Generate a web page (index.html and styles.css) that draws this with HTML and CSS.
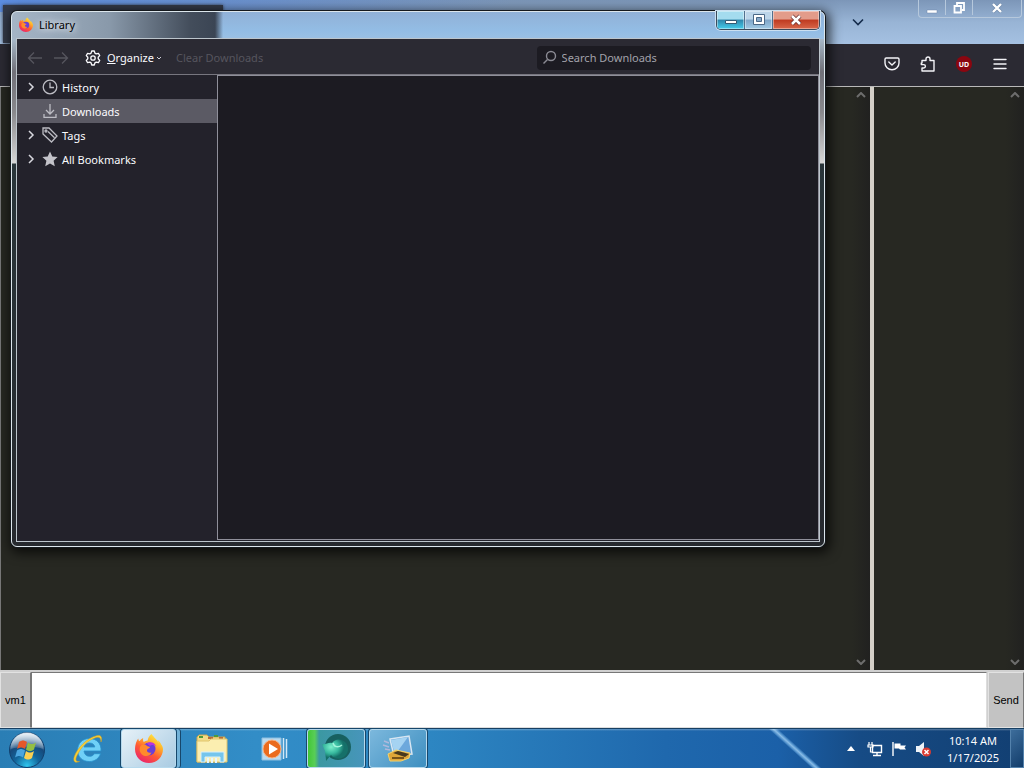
FILE: index.html
```html
<!DOCTYPE html>
<html lang="en">
<head>
    <meta charset="UTF-8">
    <meta name="viewport" content="width=device-width, initial-scale=1.0">
    <title>Library</title>
    <link rel="stylesheet" href="styles.css">
</head>
<body>
    <div class="desktop">
        <!-- Browser behind the library window -->
        <header class="browser-title">
            <div class="browser-tab"></div>
            <button class="tab-list" aria-label="List all tabs">
                <svg width="14" height="8" viewBox="0 0 14 8"><path d="M2 1.5l5 5 5-5" fill="none" stroke="#152c4c" stroke-width="1.6"/></svg>
            </button>
            <div class="browser-controls">
                <button aria-label="Minimize"><svg width="12" height="12" viewBox="0 0 12 12"><path d="M1 8h10v3H1z" fill="#fff" stroke="#6c87a8" stroke-width=".5"/></svg></button>
                <button aria-label="Restore"><svg width="12" height="12" viewBox="0 0 12 12"><path d="M4 3V1h7v7H9M1.500 4h6.500v6.500H1.500z" fill="none" stroke="#fff" stroke-width="1.8"/></svg></button>
                <button class="wide" aria-label="Close"><svg width="12" height="12" viewBox="0 0 12 12"><path d="M2 2l8 8M10 2l-8 8" stroke="#6c87a8" stroke-width="3.500"/><path d="M2 2l8 8M10 2l-8 8" stroke="#fff" stroke-width="2.400"/></svg></button>
            </div>
        </header>
        <div class="browser-toolbar">
            <button aria-label="Save to Pocket">
                <svg width="16" height="16" viewBox="0 0 16 16" fill="none" stroke="#f4f4f8" stroke-width="1.4" stroke-linecap="round" stroke-linejoin="round"><path d="M2.200 2h11.600c.7 0 1.200.5 1.200 1.200V7a7 6.800 0 0 1-14 0V3.200C1 2.500 1.500 2 2.200 2z"/><path d="M4.800 6L8 9l3.200-3"/></svg>
            </button>
            <button aria-label="Extensions">
                <svg width="16" height="16" viewBox="0 0 16 16" fill="none" stroke="#f4f4f8" stroke-width="1.4" stroke-linejoin="round"><path d="M2 7V4.500h4V3a2 2 0 0 1 4 0v1.500h4V15H2v-3h1.700a1.700 1.700 0 0 0 0-3.400H1.300V7z"/></svg>
            </button>
            <button class="ublock" aria-label="uBlock Origin">UD</button>
            <button aria-label="Menu">
                <svg width="16" height="16" viewBox="0 0 16 16"><path d="M2 3.500h12M2 8h12M2 12.500h12" stroke="#f4f4f8" stroke-width="1.4" stroke-linecap="round"/></svg>
            </button>
        </div>
        <main class="panes">
            <section class="pane pane-log">
                <div class="scrollbar">
                    <svg width="10" height="6" viewBox="0 0 10 6"><path d="M1 5l4-4 4 4" fill="none" stroke="#6d6d6d" stroke-width="2"/></svg>
                    <svg width="10" height="6" viewBox="0 0 10 6"><path d="M1 1l4 4 4-4" fill="none" stroke="#6d6d6d" stroke-width="2"/></svg>
                </div>
            </section>
            <section class="pane pane-users">
                <div class="scrollbar">
                    <svg width="10" height="6" viewBox="0 0 10 6"><path d="M1 5l4-4 4 4" fill="none" stroke="#6d6d6d" stroke-width="2"/></svg>
                    <svg width="10" height="6" viewBox="0 0 10 6"><path d="M1 1l4 4 4-4" fill="none" stroke="#6d6d6d" stroke-width="2"/></svg>
                </div>
            </section>
        </main>
        <form class="chat-form">
            <button type="button" class="chat-vm">vm1</button>
            <textarea class="chat-input" aria-label="Message"></textarea>
            <button type="button" class="chat-send">Send</button>
        </form>

        <footer class="taskbar">
            <button class="start" aria-label="Start">
                <svg width="40" height="38" viewBox="0 0 40 38">
                    <defs>
                        <radialGradient id="orb" cx=".5" cy=".95" r=".9"><stop offset="0" stop-color="#2fc6ee"/><stop offset=".4" stop-color="#12659b"/><stop offset=".7" stop-color="#164a7c"/><stop offset="1" stop-color="#a9c4da"/></radialGradient>
                        <linearGradient id="shine" x2="0" y2="1"><stop offset="0" stop-color="#fff" stop-opacity=".75"/><stop offset="1" stop-color="#fff" stop-opacity=".15"/></linearGradient>
                    </defs>
                    <circle cx="20" cy="20" r="17.500" fill="url(#orb)" stroke="#11406e"/>
                    <path d="M3.500 19a16.500 16.500 0 0 1 33 0c-9-3-22-3-33 0z" fill="url(#shine)"/>
                    <path d="M12 12c3-2 5-2 8 0l-2 7c-3-2-5-2-8 0z" fill="#e5582a"/>
                    <path d="M21 12.500c3 2 5 2 8 0l-2 7c-3 2-5 2-8 0z" fill="#93bf43"/>
                    <path d="M10 20.500c3-2 5-2 8 0l-2 7c-3-2-5-2-8 0z" fill="#4aa5df"/>
                    <path d="M19 21c3 2 5 2 8 0l-2 7c-3 2-5 2-8 0z" fill="#fbd052"/>
                </svg>
            </button>
            <button class="task" aria-label="Internet Explorer">
                <svg width="34" height="34" viewBox="0 0 34 34">
                    <path d="M30 19H13c.3 3.500 2.600 5.300 5.500 5.300 2.200 0 4-.9 4.800-2.600h6.200c-1.600 4.800-5.700 7.800-11.200 7.800-7 0-11.700-4.600-11.700-11.300S11.400 6.500 18.300 6.500C25.600 6.500 30.600 11.500 30 19zm-17-4h10.800c-.4-2.500-2.500-4-5.400-4-2.800 0-4.800 1.500-5.400 4z" fill="#6fd0f7" stroke="#278fca" stroke-width=".8"/>
                    <path d="M30 10c1.500-5 0-7.500-4.500-6.300C16 6 6.500 16 3.500 24c-1.800 4.800 0 7.800 5 5.500-4 .5-4.500-2-2.500-6C10 15 17 8 25 5.500c3.500-1 5 .5 5 4.500z" fill="#f8cf35" stroke="#d9a21c" stroke-width=".5"/>
                </svg>
            </button>
            <button class="task task-active" aria-label="Firefox">
                <svg width="32" height="32" viewBox="0 0 32 32">
                    <defs>
                        <linearGradient id="fox" x1=".8" y1="0" x2=".2" y2="1"><stop offset="0" stop-color="#fff04c"/><stop offset=".3" stop-color="#ffb52a"/><stop offset=".6" stop-color="#ff5a34"/><stop offset="1" stop-color="#e81e72"/></linearGradient>
                    </defs>
                    <path id="flame" d="M28.500 12c-.8-2-2.500-4-3.800-4.700.5 1 .8 2 1 3C24 6 20.800 4.600 18.500 1c-2.500 1.700-3.700 4.500-3.800 6.500-1.500.1-2.900.6-4 1.400-.9-1.700-.7-3.300-.5-4-1.800.8-3 2.200-3.800 3.200-.6.200-1-2-1.200-2.700C3.500 8 2 11.500 2 16c0 8 6 14 14 14s14-6 14-14c0-1.500-.8-3-1.500-4z" fill="url(#fox)"/>
                    <circle cx="16" cy="16" r="6.500" fill="#6a3fd8"/>
                    <path d="M7 14c2-3 5-3 7-1l3 1c-.3 1.500-2.500 1.500-3 3-.5 2 2 3.500 4.500 2.500-1.500 4-6.500 4.500-9.500 2-2-1.700-3-4.500-2-7.500z" fill="#ff8a2b"/>
                    <path d="M14 10.500c3-2.500 8-1 9 3-2-1.500-5-2-6-.5z" fill="#b833e1"/>
                </svg>
            </button>
            <button class="task" aria-label="Windows Explorer">
                <svg width="36" height="32" viewBox="0 0 36 32">
                    <path d="M3 4l2-2h8l2 2h16v25H3z" fill="#f3dc88" stroke="#c9a64c"/>
                    <path d="M5 4h4M20 3h4" stroke="#4d9b3c" stroke-width="2"/><path d="M14 5h5M25 5h4" stroke="#b96c36" stroke-width="2"/>
                    <path d="M3 8h12l2-2h16v23H3z" fill="#fbeeb0" stroke="#dfc46c"/>
                    <path d="M7 29V19h23v10h-4v-5H11v5z" fill="#75c5ec" stroke="#d7f0fb"/>
                    <path d="M14 25v5M18 25v5M22 25v5" stroke="#e7f6fc" stroke-width="2"/>
                </svg>
            </button>
            <button class="task" aria-label="Windows Media Player">
                <svg width="30" height="28" viewBox="0 0 30 28">
                    <path d="M3 3h19v22H3z" fill="#b9daf0" stroke="#8ebfe0"/><path d="M24.500 3v21M27.500 4v19" stroke="#d3e8f6" stroke-width="1.500"/>
                    <circle cx="13" cy="14" r="9" fill="#ea6b1e" stroke="#f8b182"/><path d="M10 8.500l9 5.500-9 5.500z" fill="#fff"/>
                </svg>
            </button>
            <button class="task task-open task-progress" aria-label="Globe">
                <svg width="34" height="32" viewBox="0 0 34 32">
                    <defs><radialGradient id="globe" cx=".35" cy=".35"><stop offset="0" stop-color="#7bf0cc"/><stop offset=".6" stop-color="#37b89e"/><stop offset="1" stop-color="#157069"/></radialGradient></defs>
                    <circle cx="19" cy="14" r="13" fill="#17605f"/>
                    <path d="M3 11c4 1 6-2 10-1 3-4 8-5 13-1 4 4 4 10 0 14-5 4-11 3-14-1l-5 6c0-4-1-7-1-10z" fill="url(#globe)"/>
                    <path d="M14 10c1 4 5 5 9 2" stroke="#a4f6dc" stroke-width="1.500" fill="none"/>
                </svg>
            </button>
            <button class="task task-open" aria-label="Remote desktop">
                <svg width="34" height="32" viewBox="0 0 34 32">
                    <path d="M9 6l19-3 3 18-18 2z" fill="#6ca8dc" stroke="#d7e6f2" stroke-width="1.500"/><path d="M10 7l17-3-13 18z" fill="#a5d3f2"/>
                    <path d="M3 8l5 2M2 12l6 2M4 16l5 1" stroke="#afb8dc" stroke-width="1.500"/>
                    <path d="M7 21l8-4 14 3-1 5-8 3H9z" fill="#dfa638" stroke="#f5d36c"/><path d="M12 20l5-2 11 3-4 3z" fill="#48391d"/><path d="M11 25h12" stroke="#785319" stroke-width="2"/>
                </svg>
            </button>
            <div class="tray">
                <button aria-label="Show hidden icons"><svg width="8" height="5" viewBox="0 0 8 5"><path d="M4 0l4 5H0z" fill="#fff"/></svg></button>
                <button aria-label="Network"><svg width="16" height="16" viewBox="0 0 16 16"><path d="M5.500 4.500h9v7h-9zM10 12v2M6 14.500h8" fill="none" stroke="#fff" stroke-width="1.4"/><path d="M2 1v3M5 1v3M1 4h5v2H1zM3.500 6v5H5" fill="none" stroke="#fff" stroke-width="1.2"/></svg></button>
                <button aria-label="Action Center"><svg width="16" height="16" viewBox="0 0 16 16"><path d="M2 1v14" stroke="#fff" stroke-width="1.4"/><path d="M3.500 2.500h6v2H15l-1.500 2L15 8.500H9l-1-1H3.500z" fill="#fff"/></svg></button>
                <button aria-label="Volume muted"><svg width="16" height="16" viewBox="0 0 16 16"><path d="M1 5h3l5-4v14l-5-4H1z" fill="#eef3f8"/><circle cx="11.500" cy="11" r="4.500" fill="#d93b32"/><path d="M9.500 9l4 4M13.500 9l-4 4" stroke="#fff" stroke-width="1.5"/></svg></button>
            </div>
            <time class="clock" datetime="2025-01-17T10:14"><span>10:14 AM</span><span>1/17/2025</span></time>
            <button class="show-desktop" aria-label="Show desktop"></button>
        </footer>

        <section class="library">
            <header class="library-title">
                <svg width="16" height="16" viewBox="0 0 32 32"><use href="#flame"/><circle cx="16" cy="16" r="6.500" fill="#6a3fd8"/><path d="M7 14c2-3 5-3 7-1l3 1c-.3 1.500-2.500 1.500-3 3-.5 2 2 3.500 4.500 2.500-1.500 4-6.500 4.500-9.500 2-2-1.700-3-4.500-2-7.500z" fill="#ff8a2b"/></svg>
                <h1>Library</h1>
                <div class="window-controls">
                    <button class="win-min" aria-label="Minimize"><svg width="14" height="12" viewBox="0 0 14 12"><path d="M1.500 6.500h11v3h-11z" fill="#fff" stroke="#345a74"/></svg></button>
                    <button class="win-max" aria-label="Maximize"><svg width="14" height="12" viewBox="0 0 14 12"><path d="M1.500.5h11v10h-11z" fill="#fff" stroke="#4b6886"/><path d="M4.500 3.500h5v4h-5z" fill="#88a9c9" stroke="#4b6886"/></svg></button>
                    <button class="win-close" aria-label="Close"><svg width="12" height="12" viewBox="0 0 12 12"><path d="M2 2l8 8M10 2l-8 8" stroke="#6b3030" stroke-width="4"/><path d="M2 2l8 8M10 2l-8 8" stroke="#fff" stroke-width="2.500"/></svg></button>
                </div>
            </header>
            <div class="library-body">
                <div class="library-toolbar">
                    <button class="nav-button" disabled aria-label="Back"><svg width="16" height="14" viewBox="0 0 16 14"><path d="M15 7H1.500M7 1.500L1.500 7 7 12.500" fill="none" stroke="#56555e" stroke-width="1.3"/></svg></button>
                    <button class="nav-button" disabled aria-label="Forward"><svg width="16" height="14" viewBox="0 0 16 14"><path d="M1 7h13.500M9 1.500L14.500 7 9 12.500" fill="none" stroke="#56555e" stroke-width="1.3"/></svg></button>
                    <button class="organize">
                        <svg width="16" height="16" viewBox="0 0 16 16" fill="none" stroke="#fbfbfe" stroke-width="1.3" stroke-linejoin="round"><path d="M6.700 1h2.600l.6 2.100 1.300.8 2.200-.6 1.300 2.300L13.200 7.200v1.600l1.500 1.600-1.300 2.300-2.200-.6-1.300.8-.6 2.100H6.700l-.6-2.100-1.300-.8-2.200.6-1.300-2.300 1.500-1.600V7.200L1.300 5.600l1.300-2.300 2.200.6 1.300-.8z"/><circle cx="8" cy="8" r="2.200"/></svg>
                        <span><u>O</u>rganize</span>
                        <svg width="6" height="4" viewBox="0 0 6 4"><path d="M1 1l2 2 2-2" fill="none" stroke="#cfcfd8"/></svg>
                    </button>
                    <button class="clear" disabled>Clear Downloads</button>
                    <label class="search">
                        <svg width="15" height="15" viewBox="0 0 15 15"><circle cx="9" cy="6" r="4.500" fill="none" stroke="#8b8b94" stroke-width="1.400"/><path d="M5.500 9.500L1.500 13.500" stroke="#8b8b94" stroke-width="1.500"/></svg>
                        <input type="search" placeholder="Search Downloads" aria-label="Search Downloads">
                    </label>
                </div>
                <div class="library-content">
                    <nav class="tree">
                        <button class="tree-row">
                            <svg class="twisty" viewBox="0 0 14 14"><path d="M5 3l4 4-4 4"/></svg>
                            <svg class="tree-icon" viewBox="0 0 16 16"><circle cx="8" cy="8" r="6.800"/><path d="M8 3.500V8.500h4"/></svg>
                            History
                        </button>
                        <button class="tree-row selected">
                            <span class="twisty"></span>
                            <svg class="tree-icon" viewBox="0 0 16 16"><path d="M8 1v10M4 7l4 4 4-4M2 11v3.300h12V11"/></svg>
                            Downloads
                        </button>
                        <button class="tree-row">
                            <svg class="twisty" viewBox="0 0 14 14"><path d="M5 3l4 4-4 4"/></svg>
                            <svg class="tree-icon" viewBox="0 0 16 16"><path d="M1 1h6l8 8-5.500 6L1 7z"/><path d="M6 4.500l6.500 6.300"/><circle cx="4" cy="4" r="1"/></svg>
                            Tags
                        </button>
                        <button class="tree-row">
                            <svg class="twisty" viewBox="0 0 14 14"><path d="M5 3l4 4-4 4"/></svg>
                            <svg class="tree-icon star" viewBox="0 0 16 16"><path d="M8 .5l2.300 4.900 5.300.6-4 3.700 1.200 5.500L8 12.500l-4.800 2.700 1.200-5.500-4-3.700 5.300-.6z"/></svg>
                            All Bookmarks
                        </button>
                    </nav>
                    <div class="download-list"></div>
                </div>
            </div>
        </section>
    </div>
</body>
</html>
```
FILE: styles.css
```css
:root {
    --toolbar: #2b2a33;
    --panel: #1c1b22;
    --chat: #272822;
    --text: #fbfbfe;
    --frame-light: #dce6ec;
}

* {
    box-sizing: border-box;
}

body {
    margin: 0;
    font-family: "Noto Sans", "Open Sans", sans-serif;
    font-size: 11px;
    color: var(--text);
}

button {
    display: flex;
    align-items: center;
    justify-content: center;
    padding: 0;
    border: none;
    background: none;
    font: inherit;
    color: inherit;
}

svg {
    display: block;
    flex-shrink: 0;
}

.desktop {
    position: relative;
    display: flex;
    flex-direction: column;
    height: 100vh;
    overflow: hidden;
}

/* Browser */
.browser-title {
    display: flex;
    align-items: flex-start;
    height: 44px;
    background:
        linear-gradient(90deg, #5b8ce0, transparent 50%) top / 100% 12px no-repeat,
        linear-gradient(180deg, #7c96b8, #98b4d5 50%, #a5c1e2);
}

.browser-tab {
    width: 220px;
    height: 38px;
    margin: 5px auto 0 3px;
    background: #343a49;
    box-shadow: 0 0 3px #343a49;
}

.tab-list {
    width: 28px;
    height: 44px;
    margin-right: 46px;
}

.browser-controls {
    display: flex;
    height: 18px;
    margin-right: 2px;
    border: 1px solid #b6c8dc;
    border-top: none;
    border-radius: 0 0 4px 4px;
}

.browser-controls button {
    width: 27px;
    height: 15px;
    border-right: 1px solid #b6c8dc;
}

.browser-controls .wide {
    width: 48px;
    border-right: none;
}

.browser-toolbar {
    display: flex;
    align-items: center;
    justify-content: flex-end;
    gap: 20px;
    height: 42px;
    padding: 0 16px 2px 0;
    background: var(--toolbar);
}

.browser-toolbar button {
    width: 16px;
    height: 16px;
}

.browser-toolbar .ublock {
    border-radius: 50%;
    background: #8b0610;
    font-size: 7px;
    font-weight: bold;
}

.panes {
    display: flex;
    flex: 1;
    min-height: 0;
    border-top: 1px solid #b9b9b9;
    background: var(--chat);
}

.pane {
    display: flex;
    justify-content: flex-end;
}

.pane-log {
    flex: 1;
    border-left: 1px solid #777;
    border-right: 4px solid #d4d0c8;
}

.pane-users {
    width: 150px;
}

.scrollbar {
    display: flex;
    flex-direction: column;
    justify-content: space-between;
    align-items: center;
    width: 18px;
    padding: 5px 0;
    background: linear-gradient(90deg, #272822, #212120);
}

.chat-form {
    display: flex;
    height: 58px;
    border-top: 2px solid #d0d0d0;
    background: #d0d0d0;
}

.chat-form button {
    font-family: "Liberation Sans", sans-serif;
    font-size: 11px;
    color: #000;
    background: #c3c3c3;
    border: 1px solid #e2e2e2;
    border-right-color: #777;
}

.chat-vm {
    width: 31px;
}

.chat-send {
    width: 36px;
}

.chat-input {
    flex: 1;
    margin: 0 1px 0 0;
    border: 1px solid #777;
    border-right-color: #ddd;
    border-bottom-color: #ddd;
    background: #fff;
    resize: none;
}

/* Taskbar */
.taskbar {
    display: flex;
    align-items: stretch;
    gap: 4px;
    height: 40px;
    padding-left: 7px;
    border-top: 1px solid #173f62;
    background:
        linear-gradient(180deg, rgba(255,255,255,0.3), transparent 2px),
        linear-gradient(42deg, transparent 46%, #4b8cc8 48%, #8abce6 51%, #5b9ad2 53%, transparent 56%) right 202px top / 56px 100% no-repeat,
        linear-gradient(90deg, #2a7eb5, #328dc7 25%, #2d86c2 42%, #1f68ad 65%, #1b60a8 76%, #164b85 84%, #123f72);
}

.start {
    width: 40px;
    margin-right: 8px;
}

.task {
    width: 58px;
}

.task-active,
.task-open {
    border: 1px solid #b6d9ed;
    border-radius: 3px;
    box-shadow: 0 0 0 1px #17476b;
}

.task-active {
    width: 55px;
    margin-right: 3px;
    background: linear-gradient(135deg, #e6f1f8, #a9cbe2);
    box-shadow: 0 0 0 1px #17476b, 4px 0 0 #72b2d8, 5px 0 0 #17476b;
}

.task-open {
    background: linear-gradient(135deg, #7cb8dd, #3e8fc0);
}

.task-progress {
    background: linear-gradient(90deg, #42c637, #59ce57 12%, #3b98a2 20%, #4795bb);
}

.tray {
    display: flex;
    align-items: center;
    gap: 8px;
    margin: 0 5px 0 auto;
}

.tray button {
    width: 16px;
}

.clock {
    display: flex;
    flex-direction: column;
    justify-content: center;
    width: 66px;
    line-height: 17px;
    text-align: center;
}

.show-desktop {
    width: 14px;
    border: 1px solid #5482ac;
    background: linear-gradient(135deg, #3d6d9b, #123d6b);
}

/* Library window */
.library {
    position: absolute;
    top: 11px;
    right: 199px;
    bottom: 221px;
    left: 11px;
    display: flex;
    flex-direction: column;
    padding: 0 4px 4px;
    border: 1px solid var(--frame-light);
    border-radius: 6px;
    background:
        linear-gradient(90deg, #a5b5c6, #8999aa 12%, #434d5b 22%, #3b4554 25%, transparent 26%) top / 100% 27px no-repeat,
        linear-gradient(180deg, #91b1d7, #93bde5 70%, #9bc0e4) top / 100% 27px no-repeat,
        linear-gradient(180deg, #a7b8c8 27px, #707078 60px, #88888c 100px, #d6d6d6 151px, #29353a 152px, #26292e);
    box-shadow: 0 0 0 1px #15191d, 2px 3px 12px 3px rgba(0,0,0,0.7);
}

.library-title {
    display: flex;
    align-items: flex-start;
    gap: 5px;
    height: 26px;
    padding: 5px 0 0 2px;
}

.library-title h1 {
    margin: 0;
    font-size: 11px;
    font-weight: normal;
    line-height: 16px;
    color: #000;
    text-shadow: 0 0 6px #fff, 0 0 10px #dce6ef;
}

.window-controls {
    display: flex;
    height: 19px;
    margin: -6px 0 0 auto;
    border: 1px solid #3b4b5c;
    border-top: none;
    border-radius: 0 0 5px 5px;
    overflow: hidden;
    box-shadow: 0 0 0 1px #cbdff0;
}

.window-controls button {
    width: 28px;
    border-right: 1px solid #51708e;
    box-shadow: inset 0 0 0 1px rgba(255,255,255,0.4);
}

.window-controls .win-min {
    background: linear-gradient(180deg, #a4dcef 45%, #2e86ac 50%, #45cdec);
}

.window-controls .win-max {
    background: linear-gradient(180deg, #bcd5e9 45%, #7fa5c8 50%, #a1cbe6);
}

.window-controls .win-close {
    width: 46px;
    border-right: none;
    background: linear-gradient(180deg, #e39c8a 45%, #bf3a20 50%, #d8674a);
}

.library-body {
    display: flex;
    flex: 1;
    flex-direction: column;
    min-height: 0;
    border: 1px solid #bcc5cc;
    background: #23222b;
}

.library-toolbar {
    display: flex;
    align-items: center;
    height: 35px;
    padding: 2px 8px 0 10px;
    background: var(--toolbar);
}

.nav-button {
    width: 16px;
    margin-right: 10px;
}

.organize {
    gap: 6px;
    margin: 0 14px 0 6px;
}

.organize svg:last-child {
    margin-left: -4px;
}

.clear {
    color: #56555e;
}

.search {
    display: flex;
    align-items: center;
    gap: 5px;
    width: 35%;
    height: 24px;
    margin-left: auto;
    padding-left: 5px;
    border-radius: 4px;
    background: var(--panel);
}

.search input {
    flex: 1;
    min-width: 0;
    padding: 0;
    border: none;
    outline: none;
    background: none;
    font: inherit;
    color: var(--text);
}

.search input::placeholder {
    color: #a2a2aa;
    opacity: 1;
}

.library-content {
    display: flex;
    flex: 1;
    min-height: 0;
    border-top: 1px solid #77767f;
}

.tree {
    width: 200px;
}

.tree-row {
    justify-content: flex-start;
    gap: 4px;
    width: 100%;
    height: 24px;
    padding-left: 7px;
}

.tree-row.selected {
    background: #5b5a64;
}

.twisty {
    width: 14px;
    height: 14px;
    fill: none;
    stroke: #d8d8de;
    stroke-width: 1.5;
}

.tree-icon {
    width: 16px;
    height: 16px;
    fill: none;
    stroke: #bdbdc4;
    stroke-width: 1.3;
}

.tree-icon.star {
    fill: #c3c3c9;
    stroke: none;
}

.download-list {
    flex: 1;
    margin-bottom: 1px;
    border: 1px solid #8f8f9a;
    background: var(--panel);
}
```
